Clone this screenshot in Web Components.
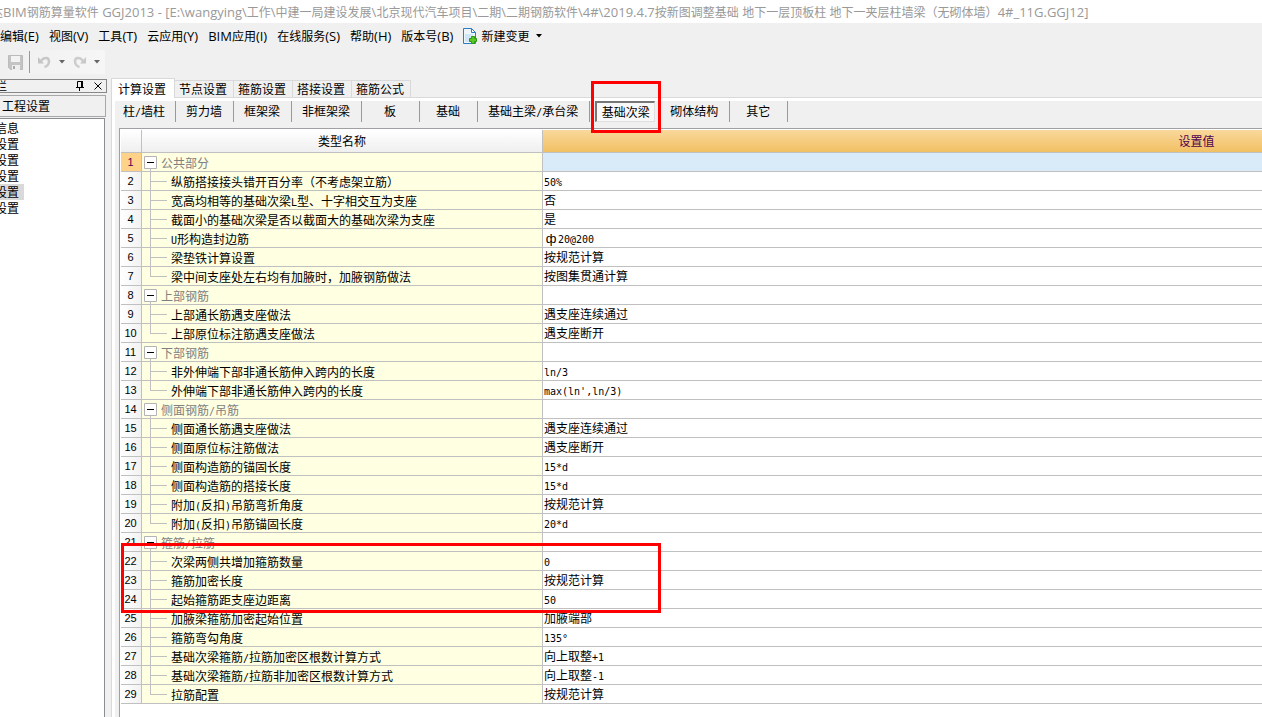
<!DOCTYPE html>
<html lang="zh-CN">
<head>
<meta charset="utf-8">
<title>BIM钢筋算量软件 GGJ2013</title>
<style>
html, body { margin: 0; height: 100%; }
body { overflow: hidden; background: #f0f0f0; color: #000; font: 12px/18px "Noto Sans CJK SC", sans-serif; }
</style>
</head>
<body>
<app-window>
  <title-bar slot="top"></title-bar>
  <menu-bar slot="top"></menu-bar>
  <tool-bar slot="top"></tool-bar>
  <side-panel slot="side"></side-panel>
  <page-tabs>
    <sub-tabs></sub-tabs>
    <settings-grid></settings-grid>
  </page-tabs>
</app-window>
<script>
const mixed = t => t
  .replace(/ф/g, '\u0001')
  .replace(/[!-~°]+/g, m => `<span class="half">${m}</span>`)
  .replace(/\u0001/g, '<span class="wide">ф</span>');
// Window chrome pairs 12px Chinese with slightly larger Latin text.
const chrome = t => t.replace(/[ -~]+/g, m => `<span class="latin">${m}</span>`);

const shared = `
  * { box-sizing: border-box; }
  button { font: inherit; color: inherit; margin: 0; padding: 0; border: 0; background: none; white-space: nowrap; }
  svg { display: block; }
  .half { font: 10px/10px "DejaVu Sans Mono", monospace; }
  .wide { display: inline-block; width: 14px; text-align: center; font: 13px/12px "Liberation Sans", sans-serif; }
  .latin { font: 13px/12px "Open Sans", sans-serif; }
`;
function define(name, render) {
  customElements.define(name, class extends HTMLElement {
    constructor() {
      super();
      this.attachShadow({ mode: 'open' }).innerHTML = render();
    }
  });
}

define('app-window', () => `<style>${shared}
  :host { display: flex; flex-direction: column; height: 100vh; }
  .body { flex: 1; display: flex; gap: 5px; min-height: 0; padding-top: 1px; }
  main { flex: 1; min-width: 0; display: flex; }
</style>
<slot name="top"></slot>
<div class="body"><slot name="side"></slot><main><slot></slot></main></div>`);

define('title-bar', () => `<style>${shared}
  :host { display: flex; align-items: center; height: 23px; overflow: hidden; background: #fff; color: #999; white-space: nowrap; }
  div { margin-left: -9px; }
</style><div>${chrome(String.raw`达BIM钢筋算量软件 GGJ2013 - [E:\wangying\工作\中建一局建设发展\北京现代汽车项目\二期\二期钢筋软件\4#\2019.4.7按新图调整基础 地下一层顶板柱 地下一夹层柱墙梁（无砌体墙）4#_11G.GGJ12]`)}</div>`);

define('menu-bar', () => `<style>${shared}
  :host { display: flex; align-items: center; gap: 10px; height: 27px; padding-bottom: 1px; box-sizing: border-box; overflow: hidden; }
  .new { display: flex; align-items: center; gap: 4px; }
  .new svg:last-child { margin-left: 2px; }
</style>
${['编辑(E)', '视图(V)', '工具(T)', '云应用(Y)', 'BIM应用(I)', '在线服务(S)', '帮助(H)', '版本号(B)'].map(t => `<button>${chrome(t)}</button>`).join('')}
<button class="new">
  <svg width="14" height="16" viewBox="0 0 14 16"><path d="M.5.5h8l4 4v11H.5z" fill="#eef6fc" stroke="#2d7fc1"/><path d="M2 6h8v8H2z" fill="#cfe6f7"/><path d="M8.500.5v4h4z" fill="#fff" stroke="#2d7fc1"/><path d="M8.500 8.500h3v2h2v3h-2v2h-3v-2h-2v-3h2z" fill="#5cc52a" stroke="#2a9b10"/></svg>
  新建变更
  <svg width="8" height="4" viewBox="0 0 8 4"><path d="M1 0h6L4 3.500z"/></svg>
</button>`);

const drop = '<svg width="6" height="4" viewBox="0 0 6 4"><path d="M0 0h6L3 3.500z" fill="#666"/></svg>';
define('tool-bar', () => `<style>${shared}
  :host { display: flex; align-items: center; width: 105px; height: 24px; margin-bottom: 4px; padding-left: 8px; box-sizing: border-box;
    background: linear-gradient(90deg, #f0f0f0, #f6f6f6); }
  .rule { width: 1px; height: 22px; margin: 0 8px 0 6px; background: #999; }
  button { display: flex; }
  button + button { margin-left: 8px; }
</style>
<button aria-label="保存"><svg width="15" height="15" viewBox="0 0 15 15"><path d="M.5.5h14v14H2.500l-2-2z" fill="#c4c4c4" stroke="#bbb"/><path d="M3 1h9v6H3z" fill="#f3f3f3"/><path d="M4 10h8v5H4z" fill="#eee"/><path d="M5 11h2v3H5z" fill="#aaa"/></svg></button>
<span class="rule"></span>
<button aria-label="撤销"><svg width="13" height="14" viewBox="0 0 13 14"><path d="M3 6C6 2 11 2 11 6.500c0 3-2.500 5-4.500 5.500" fill="none" stroke="#c8c8c8" stroke-width="2.500"/><path d="M0 2v6.500h6z" fill="#c4c4c4"/></svg></button>
<button aria-label="撤销列表">${drop}</button>
<button aria-label="恢复"><svg width="13" height="14" viewBox="0 0 13 14"><path d="M10 6C7 2 2 2 2 6.500c0 3 2.500 5 4.500 5.500" fill="none" stroke="#ccc" stroke-width="2.500"/><path d="M13 2v6.500H7z" fill="#c8c8c8"/></svg></button>
<button aria-label="恢复列表">${drop}</button>`);

define('side-panel', () => `<style>${shared}
  :host { display: flex; flex-direction: column; flex: 0 0 107px; margin-right: -1px; overflow: hidden; }
  header { display: flex; align-items: center; height: 14px; gap: 10px; padding-right: 4px; border: 1px solid #888; border-left: 0; overflow: hidden; }
  header span { flex: 1; margin-left: -5px; }
  .group { height: 22px; line-height: 20px; margin: 2px 1px 1px 0; padding-left: 2px; text-align: left; border: 1px solid #a8a8a8; border-left: 0; }
  nav { flex: 1; display: flex; flex-direction: column; align-items: flex-start; margin-right: 2px; padding-top: 1px; background: #fff; border: solid #8a8d92; border-width: 1px 1px 0 0; }
  nav button { height: 16px; line-height: 16px; margin-left: -5px; padding-right: 5px; }
  nav [aria-current] { background: #d9d9d9; }
</style>
<header><span>栏</span>
  <button aria-label="固定"><svg width="8" height="10" viewBox="0 0 8 10"><path d="M1.500 6V.5H6M0 6.500h8M3.500 7v3" fill="none" stroke="#000"/><path d="M5 0h2v6H5z"/></svg></button>
  <button aria-label="关闭"><svg width="8" height="8" viewBox="0 0 8 8"><path d="M.5.5l7 7M7.500.5l-7 7" stroke="#000" fill="none"/></svg></button>
</header>
<button class="group">工程设置</button>
<nav><button>信息</button><button>设置</button><button>设置</button><button>设置</button><button aria-current="page">设置</button><button>设置</button></nav>`);

define('page-tabs', () => `<style>${shared}
  :host { flex: 1; min-width: 0; display: flex; flex-direction: column; }
  .tabs { display: flex; align-items: flex-end; height: 19px; margin-top: -1px; }
  .tabs button { width: 59px; height: 17px; line-height: 16px; padding-right: 2px; border: 1px solid #d9d9d9; border-width: 1px 1px 0 0; }
  .tabs [aria-selected=true] { width: 64px; height: 20px; border-left-width: 1px; background: #fff; position: relative; margin-bottom: -1px; line-height: 17px; }
  .page { flex: 1; min-height: 0; display: flex; flex-direction: column; padding: 3px 0 0 3px; border: 1px solid #d9d9d9; border-width: 1px 0 0 1px; background: #fff; }
  .fill { flex: 1; min-height: 0; display: flex; flex-direction: column; background: #f0f0f0; }
</style>
<div class="tabs" role="tablist">${['计算设置', '节点设置', '箍筋设置', '搭接设置', '箍筋公式'].map((t, i) => `<button role="tab" aria-selected="${i === 0}">${t}</button>`).join('')}</div>
<div class="page"><div class="fill"><slot></slot></div></div>`);

define('sub-tabs', () => `<style>${shared}
  :host { display: flex; height: 27px; }
  .cell { position: relative; display: flex; justify-content: center; min-width: 58px; height: 21px; padding: 0 11px 0 10px; border-right: 1px solid #999; }
  .cell:first-of-type { padding: 0 10px 0 8px; }
  .cell button { line-height: 20px; height: 20px; }
  .cell.on { padding: 0 5px; border-right: 0; min-width: 70px; }
  .on button { width: 60px; height: 21px; line-height: 18px; border: 1px solid #e0e0e0; border-top: 2px solid #777; border-left: 2px solid #777; background: #f8f8f8; }
  .on .mark { position: absolute; left: 1px; right: -1px; top: -20px; height: 52px; border: 3px solid #f00; pointer-events: none; z-index: 1; }
</style>${['柱/墙柱', '剪力墙', '框架梁', '非框架梁', '板', '基础', '基础主梁/承台梁', '基础次梁', '砌体结构', '其它'].map(t =>
  t === '基础次梁' ? `<div class="cell on"><button aria-pressed="true">${t}</button><span class="mark"></span></div>`
                  : `<div class="cell"><button>${mixed(t)}</button></div>`).join('')}`);

const groups = [
  ['公共部分', [
    ['纵筋搭接接头错开百分率（不考虑架立筋）', '50%'],
    ['宽高均相等的基础次梁L型、十字相交互为支座', '否'],
    ['截面小的基础次梁是否以截面大的基础次梁为支座', '是'],
    ['U形构造封边筋', 'ф20@200'],
    ['梁垫铁计算设置', '按规范计算'],
    ['梁中间支座处左右均有加腋时，加腋钢筋做法', '按图集贯通计算']]],
  ['上部钢筋', [['上部通长筋遇支座做法', '遇支座连续通过'], ['上部原位标注筋遇支座做法', '遇支座断开']]],
  ['下部钢筋', [['非外伸端下部非通长筋伸入跨内的长度', 'ln/3'], ['外伸端下部非通长筋伸入跨内的长度', "max(ln',ln/3)"]]],
  ['侧面钢筋/吊筋', [
    ['侧面通长筋遇支座做法', '遇支座连续通过'], ['侧面原位标注筋做法', '遇支座断开'],
    ['侧面构造筋的锚固长度', '15*d'], ['侧面构造筋的搭接长度', '15*d'],
    ['附加(反扣)吊筋弯折角度', '按规范计算'], ['附加(反扣)吊筋锚固长度', '20*d']]],
  ['箍筋/拉筋', [
    ['次梁两侧共增加箍筋数量', '0'], ['箍筋加密长度', '按规范计算'], ['起始箍筋距支座边距离', '50'],
    ['加腋梁箍筋加密起始位置', '加腋端部'], ['箍筋弯勾角度', '135°'],
    ['基础次梁箍筋/拉筋加密区根数计算方式', '向上取整+1'],
    ['基础次梁箍筋/拉筋非加密区根数计算方式', '向上取整-1'], ['拉筋配置', '按规范计算']]]
];
function gridRows() {
  let n = 0;
  return groups.map(([title, items]) => {
    n++;
    const head = `<tr class="group${n === 1 ? ' current' : ''}"><th scope="row">${n}</th>
      <td class="name"><div><svg width="19" height="18"><path d="M8.500 15v3" stroke="#c0c0c0"/><path d="M2.500 3.500h12v12h-12z" fill="#fff" stroke="#b4b4b4"/><path d="M5 9.500h7" stroke="#000"/></svg><span>${mixed(title)}</span></div></td><td></td></tr>`;
    return head + items.map(([name, value], i) => {
      n++;
      const end = i === items.length - 1 ? 9.5 : 18;
      return `<tr><th scope="row">${n}</th><td class="name"><div><svg width="29" height="18"><path d="M8.500 0V${end}M8 9.500h17" fill="none" stroke="#c0c0c0"/></svg><span>${mixed(name)}</span></div></td><td>${mixed(value)}</td></tr>`;
    }).join('');
  }).join('');
}
define('settings-grid', () => `<style>${shared}
  :host { position: relative; flex: 1; min-height: 0; display: block; margin-left: 4px; padding: 1px 0 0 1px; overflow: hidden; background: #fff; border: 1px solid #a0a0a4; border-width: 1px 0 0 1px; }
  table { table-layout: fixed; width: 1730px; border-collapse: separate; border-spacing: 0; }
  th, td { height: 19px; padding: 0; font-weight: normal; line-height: 18px; border: solid #c0c0c0; border-width: 0 1px 1px 0; white-space: nowrap; text-align: left; overflow: hidden; }
  td { padding-left: 1px; background: #fff; }
  thead th { height: 23px; line-height: 22px; text-align: center; background: linear-gradient(#fff, #efefef); }
  thead .value { color: #500050; background: linear-gradient(#f9d89c, #f1c063); }
  tbody th { padding-right: 1px; text-align: center; font: 11px/18px "Liberation Sans", sans-serif; background: linear-gradient(90deg, #fff, #f2f2f2); }
  .name { padding: 0; background: #ffffe1; }
  .name div { display: flex; height: 18px; }
  .name span { line-height: 20px; }
  .name .half { line-height: 10px; }
  .group .name { color: #808080; }
  .current th { color: #500050; background: #ffd28a; }
  .current td:last-child { background: #d9eaf8; }
  .mark { position: absolute; left: 1px; top: 414px; width: 540px; height: 70px; border: 3px solid #f00; pointer-events: none; }
</style>
<table>
  <colgroup><col style="width:21px"><col style="width:401px"><col></colgroup>
  <thead><tr><th></th><th scope="col">类型名称</th><th scope="col" class="value">设置值</th></tr></thead>
  <tbody>${gridRows()}</tbody>
</table>
<span class="mark"></span>`);
</script>
</body>
</html>
